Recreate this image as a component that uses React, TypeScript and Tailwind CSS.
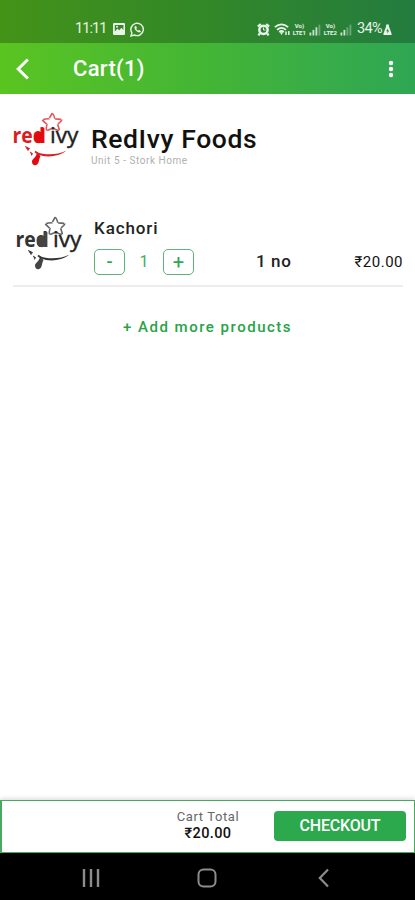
import { useState } from "react";

type LogoProps = {
  accent: string;
  dark: string;
  fill: string;
};

function RedIvyLogo({ accent, dark, fill }: LogoProps) {
  return (
    <svg width="68" height="56" viewBox="0 0 68 56" className="shrink-0">
      <path
        d="M40 1.5 Q41.5 1.5 42.8 6.8 L49.6 7.4 Q50.5 8.5 45.6 12.2 L47.4 17.8 Q46.5 19.2 41 16.2 L35 18.6 Q33.6 18 35 12.4 L30.6 8.4 Q30.6 7 37 6.8 Z"
        fill="none"
        stroke={accent}
        strokeWidth="1.6"
        strokeDasharray="6 0.5"
        strokeLinejoin="round"
        opacity="0.75"
      />
      <text x="0.5" y="31" textLength="32.5" lengthAdjust="spacingAndGlyphs" fontFamily="Open Sans, sans-serif" fontSize="21" fontWeight="700" fill={accent}>
        red
      </text>
      <ellipse cx="27" cy="25.4" rx="5" ry="5.8" fill={fill} />
      <rect x="28.8" y="16" width="3.6" height="15" fill={fill} />
      <text
        x="38"
        y="31"
        textLength="28.5"
        lengthAdjust="spacingAndGlyphs"
        fontFamily="Open Sans, sans-serif"
        fontSize="21"
        fontWeight="500"
        fill={dark}
        stroke={dark}
        strokeWidth="0.4"
      >
        ivy
      </text>
      <path d="M24 40 C33 43.3 45 43.3 54.5 38.5 C46 45.3 34 45.6 26 42.5 Z" fill={accent} />
      <path d="M25 41 L28.5 44 C27 46.5 27.3 49 26 51.5 C24 54.5 19.8 53.5 20 49.5 C20.2 46.5 23.5 46.5 25 41 Z" fill={fill} />
      <path d="M13.5 34.5 L17.5 36.5 L16 38.5 Z M18 40 L20.5 41.5 L19.5 43.5" fill={fill} stroke={accent} strokeWidth="0.8" />
      <path d="M23 39.5 L26.5 42" stroke={accent} strokeWidth="1.8" />
    </svg>
  );
}

function SignalGroup({ sim, level }: { sim: number; level: number }) {
  return (
    <span className="flex h-[14px] items-end">
      <span className="flex w-[17px] flex-col items-center text-[6px] leading-[7px] font-bold">
        <span>Vo)</span>
        <span>LTE{sim}</span>
      </span>
      <svg width="14" height="12" viewBox="0 0 14 12" fill="currentColor">
        {[0, 1, 2, 3].map((bar) => (
          <rect key={bar} x={1.5 + bar * 3} y={8.5 - bar * 2.6} width="1.8" height={3 + bar * 2.6} opacity={bar < level ? 0.85 : 0.35} />
        ))}
      </svg>
    </span>
  );
}

function StatusBar() {
  return (
    <div className="flex h-[43px] items-center bg-black/25 pt-[15px] pr-[23px] pl-[75px] text-white/90">
      <span className="w-[32px] text-[14.5px] leading-4 tracking-[-0.9px]">11:11</span>
      <svg className="ml-[6px]" width="12" height="12" viewBox="0 0 12 12">
        <rect width="12" height="12" rx="1" fill="currentColor" />
        <path d="M1.8 8.5 L4.5 5.5 L6.2 7.2 L8.5 4.8 L10.4 7 V2 H1.8 Z" fill="#39842a" />
        <circle cx="4" cy="3.7" r="1" fill="currentColor" />
      </svg>
      <svg className="ml-[5px]" width="15" height="15" viewBox="0 0 15 15" fill="none" stroke="currentColor">
        <path d="M1 14 L1.9 10.8 A6.2 6.2 0 1 1 4.4 13 Z" strokeWidth="1.4" />
        <path d="M5 4.5 C4 7.5 7.8 11 10.5 9.8 L10.4 9 L8.9 8.2 L8 9 C7 8.5 6.3 7.8 5.9 6.9 L6.6 6 L5.9 4.3 Z" fill="currentColor" strokeWidth="0.6" />
      </svg>
      <div className="ml-auto flex items-center">
        <svg width="13" height="13" viewBox="0 0 13 13">
          <circle cx="6.5" cy="6.8" r="5.4" fill="currentColor" />
          <path d="M0.8 3.5 L3.8 1 M12.2 3.5 L9.2 1 M2.8 10.5 L1.4 12.4 M10.2 10.5 L11.6 12.4" stroke="currentColor" strokeWidth="2.2" />
          <circle cx="6.5" cy="6.8" r="2.9" fill="#2c8034" />
          <path d="M6.5 4.5 V7 H8.5" stroke="currentColor" fill="none" />
        </svg>
        <svg className="ml-[4px]" width="17" height="13" viewBox="0 0 17 13" fill="none" stroke="currentColor" strokeWidth="1.7">
          <path d="M0.8 4.2 Q7.5 -1.5 14.2 4.2 M3 6.8 Q7.5 2.8 12 6.8 M5.2 9 Q7.5 7 9.8 9" />
          <path d="M7.5 12 L5.8 9.2 H9.2 Z" fill="currentColor" stroke="none" />
          <path d="M12 8.5 V12 M14.8 8 V12" strokeWidth="1.5" />
        </svg>
        <SignalGroup sim={1} level={3} />
        <SignalGroup sim={2} level={2} />
        <span className="ml-[4px] text-[14.5px] leading-4 tracking-[-0.6px]">34%</span>
        <svg className="ml-px" width="9" height="13" viewBox="0 0 10 13">
          <path d="M3.5 1 H6.5 V3 L9.5 11 V12.5 H0.5 V11 L3.5 3 Z" fill="currentColor" />
          <path d="M5.5 5 L3.5 8.5 H5 L4.5 11 L7 7.5 H5.3 Z" fill="#277d3a" />
        </svg>
      </div>
    </div>
  );
}

function AppHeader({ count }: { count: number }) {
  return (
    <header className="bg-linear-to-r from-[#5ac420] via-[#43b535] to-[#2fa653]">
      <StatusBar />
      <div className="flex h-[51px] items-center pr-[20px] pl-[16px] text-white">
        <button type="button" aria-label="Back">
          <svg width="14" height="22" viewBox="0 0 14 22" fill="none" stroke="currentColor" strokeWidth="3">
            <path d="M11.8 1.5 L2.2 11 L11.8 20.5" />
          </svg>
        </button>
        <h1 className="ml-[43px] text-[22px] leading-none font-medium tracking-[0.3px]">Cart({count})</h1>
        <button type="button" aria-label="More" className="ml-auto">
          <svg width="8" height="18" viewBox="0 0 8 18" fill="currentColor">
            <circle cx="4" cy="3" r="2.2" />
            <circle cx="4" cy="9" r="2.2" />
            <circle cx="4" cy="15" r="2.2" />
          </svg>
        </button>
      </div>
    </header>
  );
}

export default function App() {
  const [quantity, setQuantity] = useState(1);
  const total = `₹${(quantity * 20).toFixed(2)}`;

  return (
    <div className="flex h-[900px] w-[415px] flex-col overflow-hidden bg-white font-[Roboto,sans-serif] text-[#111]">
      <AppHeader count={1} />

      <main className="flex-1 pt-[18px]">
        <section className="flex pl-[12px]">
          <RedIvyLogo accent="#d91d24" dark="#222222" fill="#e20910" />
          <div className="pt-[12px] pl-[11px]">
            <h2 className="text-[26.5px] leading-[30px] font-medium tracking-[0.6px] whitespace-nowrap text-[#111]">RedIvy Foods</h2>
            <p className="text-[10px] leading-[13px] tracking-[0.55px] text-[#b0b0b0]">Unit 5 - Stork Home</p>
          </div>
        </section>

        <section className="mt-[47px] mr-[12px] ml-[13px] flex h-[72px] border-b-2 border-[#ededed]">
          <div className="pt-px pl-[2px]">
            <RedIvyLogo accent="#333333" dark="#222222" fill="#444444" />
          </div>
          <div className="flex-1 pt-[3px] pl-[11px]">
            <h3 className="text-[17px] leading-5 font-medium tracking-[0.9px] text-[#222]">Kachori</h3>
            <div className="mt-[11px] flex h-[26px] items-center">
              <button
                type="button"
                onClick={() => setQuantity(Math.max(1, quantity - 1))}
                className="h-[26px] w-[31px] rounded-[5px] border border-[#5eb578] text-[18px] leading-none font-medium text-[#2fa653]"
              >
                -
              </button>
              <span className="w-[38px] text-center text-[16px] text-[#46ad62]">{quantity}</span>
              <button
                type="button"
                onClick={() => setQuantity(quantity + 1)}
                className="h-[26px] w-[31px] rounded-[5px] border border-[#5eb578] text-[20px] leading-none text-[#2fa653]"
              >
                +
              </button>
              <span className="ml-[62px] text-[17px] font-medium tracking-[0.6px] text-[#222]">1 no</span>
              <span className="ml-auto text-[15px] tracking-[0.5px]">{total}</span>
            </div>
          </div>
        </section>

        <button type="button" className="mt-[28px] block w-full text-center text-[15px] leading-6 font-medium tracking-[1.5px] text-[#27a348]">
          + Add more products
        </button>
      </main>

      <footer className="flex h-[53px] items-center border border-l-2 border-[#4aa960] pr-[8px] pb-[2px] shadow-[0_-2px_4px_rgba(0,0,0,0.12)]">
        <div className="ml-[159px] w-[94px] text-center">
          <p className="text-[13px] leading-4 tracking-[0.6px] text-[#666]">Cart Total</p>
          <p className="text-[14.5px] leading-[17px] font-medium tracking-[0.4px]">{total}</p>
        </div>
        <button type="button" className="ml-auto h-[30px] w-[132px] rounded-[4px] bg-[#2ca94c] text-[16px] font-medium tracking-[-0.2px] text-white">
          CHECKOUT
        </button>
      </footer>

      <nav className="flex h-[47px] items-center bg-black pt-[3px] text-[#8c8c8c]">
        <svg className="ml-[82px]" width="18" height="18" viewBox="0 0 18 18" fill="none" stroke="currentColor" strokeWidth="2.4">
          <path d="M2 0 V18 M9 0 V18 M16 0 V18" />
        </svg>
        <svg className="ml-[97px]" width="20" height="20" viewBox="0 0 20 20" fill="none" stroke="currentColor" strokeWidth="2">
          <rect x="1.5" y="1.5" width="17" height="17" rx="5" />
        </svg>
        <svg className="ml-[101px]" width="12" height="20" viewBox="0 0 12 20" fill="none" stroke="currentColor" strokeWidth="2.2">
          <path d="M10 1.5 L1.8 10 L10 18.5" />
        </svg>
      </nav>
    </div>
  );
}
